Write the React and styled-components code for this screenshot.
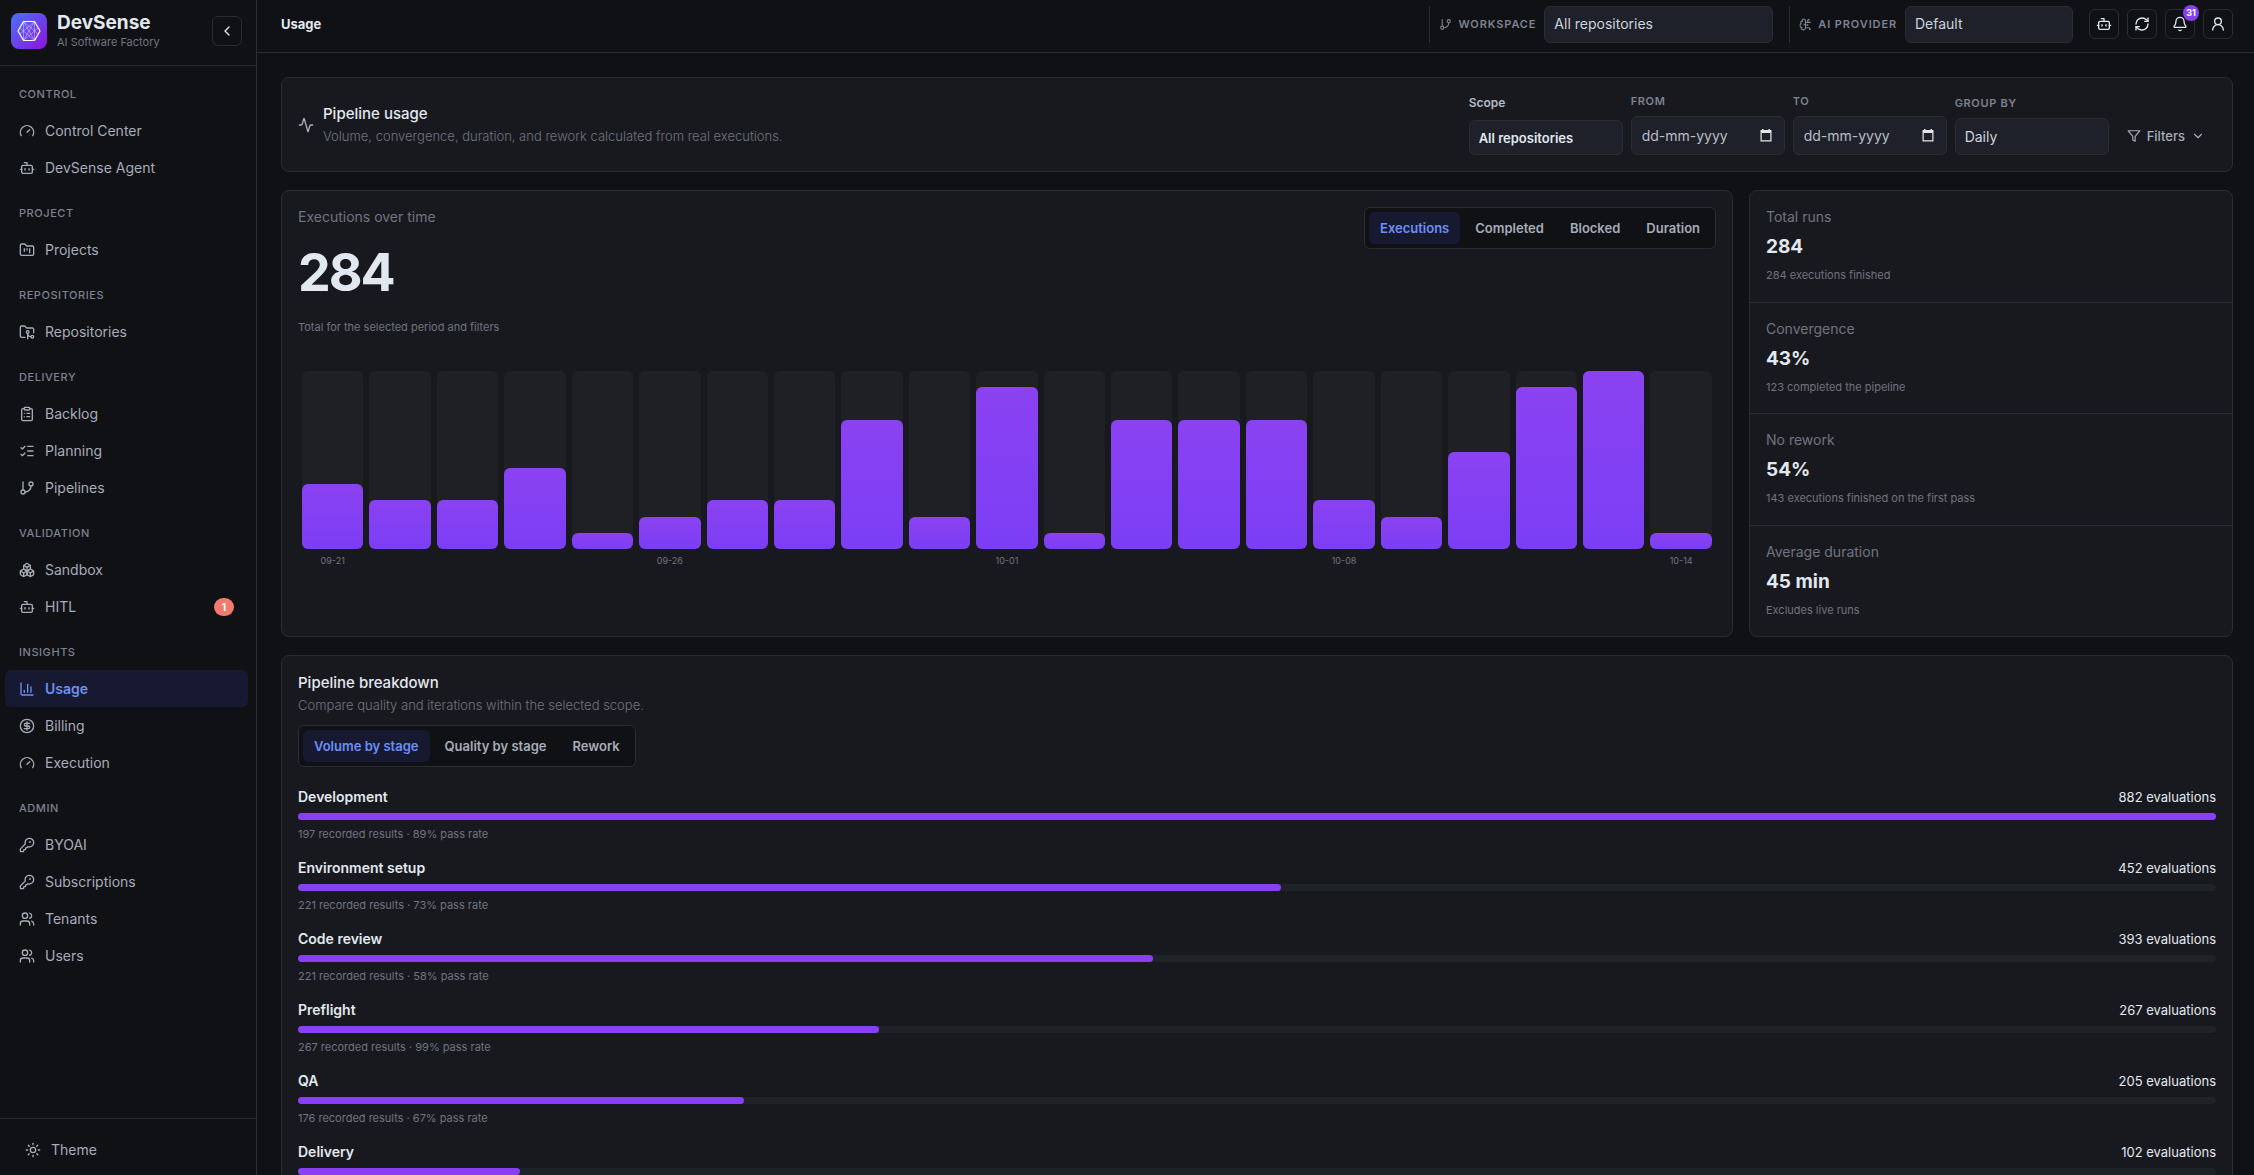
import React, { useState } from "react";
import styled, { createGlobalStyle, css } from "styled-components";
import {
  Activity,
  Bell,
  Bot,
  Boxes,
  BrainCircuit,
  ChartColumn,
  ChevronDown,
  ChevronLeft,
  CircleDollarSign,
  ClipboardList,
  FolderGit2,
  FolderKanban,
  Gauge,
  GitBranch,
  KeyRound,
  ListChecks,
  RefreshCw,
  Sun,
  UserRound,
  Users,
} from "lucide-react";

const vars = {
  bg: "#101115",
  card: "#18191e",
  field: "#1e2129",
  border: "#2b2c33",
  text: "#e2e8f0",
  textSoft: "#a7acb9",
  muted: "#70747f",
  accent: "#6c8ff5",
  accentBg: "#171930",
  purple: "#8940f2",
  track: "#1f2226",
};

const navGroups = [
  {
    title: "Control",
    items: [
      { label: "Control Center", icon: Gauge },
      { label: "DevSense Agent", icon: Bot },
    ],
  },
  { title: "Project", items: [{ label: "Projects", icon: FolderKanban }] },
  {
    title: "Repositories",
    items: [{ label: "Repositories", icon: FolderGit2 }],
  },
  {
    title: "Delivery",
    items: [
      { label: "Backlog", icon: ClipboardList },
      { label: "Planning", icon: ListChecks },
      { label: "Pipelines", icon: GitBranch },
    ],
  },
  {
    title: "Validation",
    items: [
      { label: "Sandbox", icon: Boxes },
      { label: "HITL", icon: Bot, count: 1 },
    ],
  },
  {
    title: "Insights",
    items: [
      { label: "Usage", icon: ChartColumn, active: true },
      { label: "Billing", icon: CircleDollarSign },
      { label: "Execution", icon: Gauge },
    ],
  },
  {
    title: "Admin",
    items: [
      { label: "BYOAI", icon: KeyRound },
      { label: "Subscriptions", icon: KeyRound },
      { label: "Tenants", icon: Users },
      { label: "Users", icon: Users },
    ],
  },
];

const runs = [
  { value: 4, label: "09-21" },
  { value: 3 },
  { value: 3 },
  { value: 5 },
  { value: 1 },
  { value: 2, label: "09-26" },
  { value: 3 },
  { value: 3 },
  { value: 8 },
  { value: 2 },
  { value: 10, label: "10-01" },
  { value: 1 },
  { value: 8 },
  { value: 8 },
  { value: 8 },
  { value: 3, label: "10-08" },
  { value: 2 },
  { value: 6 },
  { value: 10 },
  { value: 11 },
  { value: 1, label: "10-14" },
];
const maxRuns = Math.max(...runs.map((run) => run.value));

const stats = [
  { label: "Total runs", value: "284", hint: "284 executions finished" },
  { label: "Convergence", value: "43%", hint: "123 completed the pipeline" },
  {
    label: "No rework",
    value: "54%",
    hint: "143 executions finished on the first pass",
  },
  { label: "Average duration", value: "45 min", hint: "Excludes live runs" },
];

const stages = [
  { name: "Development", count: 882, results: 197, rate: 89 },
  { name: "Environment setup", count: 452, results: 221, rate: 73 },
  { name: "Code review", count: 393, results: 221, rate: 58 },
  { name: "Preflight", count: 267, results: 267, rate: 99 },
  { name: "QA", count: 205, results: 176, rate: 67 },
  { name: "Delivery", count: 102 },
];
const maxCount = stages[0].count;

const Logo = () => (
  <LogoBox>
    <svg width="36" height="36" viewBox="0 0 36 36" fill="none" stroke="#fff">
      <path
        d="M7 18 12.5 8.5h11L29 18l-5.5 9.5h-11z"
        strokeWidth="1.2"
        strokeLinejoin="round"
      />
      <path
        d="M12.5 8.5 23.5 27.5M23.5 8.5 12.5 27.5M12.5 8.5 27 21M23.5 8.5 9 21M12.5 27.5 27 15M23.5 27.5 9 15M12.5 8.5v19M23.5 8.5v19"
        strokeWidth="0.6"
        opacity="0.65"
      />
    </svg>
  </LogoBox>
);

const FilterIcon = () => (
  <svg
    width="14"
    height="14"
    viewBox="0 0 24 24"
    fill="none"
    stroke="currentColor"
    strokeWidth="2"
    strokeLinejoin="round"
    aria-hidden="true"
  >
    <polygon points="22 3 2 3 10 12.46 10 19 14 21 14 12.46 22 3" />
  </svg>
);

const CalendarIcon = () => (
  <svg width="12" height="13" viewBox="0 0 12 13" aria-hidden="true">
    <path
      d="M2 0h1.500v1h5V0H10v1h1.500v11.500H.5V1H2zM1.700 4v7.300h8.600V4z"
      fill="#e6e6e6"
      fillRule="evenodd"
    />
  </svg>
);

const TabBar = ({ label, options }) => {
  const [current, setCurrent] = useState(options[0]);
  return (
    <Tabs role="tablist" aria-label={label}>
      {options.map((option) => (
        <Tab
          key={option}
          type="button"
          role="tab"
          aria-selected={option === current}
          $active={option === current}
          onClick={() => setCurrent(option)}
        >
          {option}
        </Tab>
      ))}
    </Tabs>
  );
};

const DateField = ({ id, label }) => (
  <Field>
    <FieldLabel htmlFor={id}>{label}</FieldLabel>
    <DateBox>
      <DateInput id={id} type="text" placeholder="dd-mm-yyyy" />
      <CalendarIcon />
    </DateBox>
  </Field>
);

const Sidebar = () => (
  <Aside>
    <Brand>
      <Logo />
      <BrandText>
        <BrandName>DevSense</BrandName>
        <BrandTagline>AI Software Factory</BrandTagline>
      </BrandText>
      <IconButton type="button" aria-label="Collapse sidebar">
        <ChevronLeft size={16} />
      </IconButton>
    </Brand>
    <Nav>
      {navGroups.map((group) => (
        <div key={group.title}>
          <NavTitle>{group.title}</NavTitle>
          {group.items.map(({ label, icon: Icon, active, count }) => (
            <NavLink key={label} href="#" $active={active}>
              <Icon size={16} />
              {label}
              {count && <NavCount>{count}</NavCount>}
            </NavLink>
          ))}
        </div>
      ))}
    </Nav>
    <AsideFooter>
      <ThemeButton type="button">
        <Sun size={16} />
        Theme
      </ThemeButton>
    </AsideFooter>
  </Aside>
);

const Header = () => (
  <Topbar>
    <PageTitle>Usage</PageTitle>
    <Context>
      <ContextLabel htmlFor="workspace">
        <GitBranch size={13} />
        Workspace
      </ContextLabel>
      <ContextSelect id="workspace" $width={229}>
        <option>All repositories</option>
      </ContextSelect>
    </Context>
    <Context>
      <ContextLabel htmlFor="provider">
        <BrainCircuit size={13} />
        AI Provider
      </ContextLabel>
      <ContextSelect id="provider" $width={168}>
        <option>Default</option>
      </ContextSelect>
    </Context>
    <Actions>
      <IconButton type="button" aria-label="Agent">
        <Bot size={16} />
      </IconButton>
      <IconButton type="button" aria-label="Refresh">
        <RefreshCw size={16} />
      </IconButton>
      <IconButton type="button" aria-label="Notifications">
        <Bell size={16} />
        <AlertCount>31</AlertCount>
      </IconButton>
      <IconButton type="button" aria-label="Account">
        <UserRound size={16} />
      </IconButton>
    </Actions>
  </Topbar>
);

const App = () => {
  return (
    <>
      <GlobalStyle />
      <Shell>
        <Sidebar />
        <Main>
          <Header />
          <Content>
            <FilterCard>
              <Activity size={16} />
              <Intro>
                <CardTitle>Pipeline usage</CardTitle>
                <CardText>
                  Volume, convergence, duration, and rework calculated from real
                  executions.
                </CardText>
              </Intro>
              <Fields>
                <Field>
                  <ScopeLabel htmlFor="scope">Scope</ScopeLabel>
                  <ScopeSelect id="scope">
                    <option>All repositories</option>
                  </ScopeSelect>
                </Field>
                <DateField id="from" label="From" />
                <DateField id="to" label="To" />
                <Field>
                  <FieldLabel htmlFor="group">Group by</FieldLabel>
                  <Select id="group">
                    <option>Daily</option>
                  </Select>
                </Field>
                <FiltersButton type="button">
                  <FilterIcon />
                  Filters
                  <ChevronDown size={14} />
                </FiltersButton>
              </Fields>
            </FilterCard>

            <Overview>
              <TrendCard>
                <TrendHead>
                  <div>
                    <Label>Executions over time</Label>
                    <Total>284</Total>
                    <Hint>Total for the selected period and filters</Hint>
                  </div>
                  <TabBar
                    label="Metric"
                    options={["Executions", "Completed", "Blocked", "Duration"]}
                  />
                </TrendHead>
                <Chart>
                  {runs.map((run, index) => (
                    <Column key={index}>
                      <Slot>
                        <Bar
                          style={{ height: `${(run.value / maxRuns) * 100}%` }}
                        />
                      </Slot>
                      <Tick>{run.label}</Tick>
                    </Column>
                  ))}
                </Chart>
              </TrendCard>
              <StatsCard>
                {stats.map((stat) => (
                  <Stat key={stat.label}>
                    <Label>{stat.label}</Label>
                    <StatValue>{stat.value}</StatValue>
                    <Hint>{stat.hint}</Hint>
                  </Stat>
                ))}
              </StatsCard>
            </Overview>

            <BreakdownCard>
              <CardTitle>Pipeline breakdown</CardTitle>
              <CardText>
                Compare quality and iterations within the selected scope.
              </CardText>
              <TabBar
                label="Breakdown"
                options={["Volume by stage", "Quality by stage", "Rework"]}
              />
              <Stages>
                {stages.map((stage) => (
                  <li key={stage.name}>
                    <StageHead>
                      <strong>{stage.name}</strong>
                      <span>{stage.count} evaluations</span>
                    </StageHead>
                    <StageTrack>
                      <StageFill
                        style={{ width: `${(stage.count / maxCount) * 100}%` }}
                      />
                    </StageTrack>
                    {stage.results && (
                      <Hint>
                        {stage.results} recorded results · {stage.rate}% pass
                        rate
                      </Hint>
                    )}
                  </li>
                ))}
              </Stages>
            </BreakdownCard>
          </Content>
        </Main>
      </Shell>
    </>
  );
};

export default App;

const GlobalStyle = createGlobalStyle`
  * {
    box-sizing: border-box;
  }

  body {
    margin: 0;
    background: ${vars.bg};
    color: ${vars.text};
    font-family: "Inter", sans-serif;
    font-size: 13px;
    line-height: 20px;
  }

  button,
  input,
  select {
    font: inherit;
    color: inherit;
  }

  h1, h2, p, ul {
    margin: 0;
    padding: 0;
  }

  svg {
    display: block;
    flex: none;
  }
`;

const Shell = styled.div`
  display: flex;
  height: 100vh;
  overflow: hidden;
`;

const Aside = styled.aside`
  display: flex;
  flex: none;
  flex-direction: column;
  width: 257px;
  border-right: 1px solid ${vars.border};
`;

const Brand = styled.div`
  display: flex;
  flex: none;
  align-items: center;
  gap: 10px;
  height: 66px;
  padding: 0 14px 4px 11px;
  border-bottom: 1px solid ${vars.border};
`;

const LogoBox = styled.div`
  flex: none;
  border-radius: 8px;
  background: linear-gradient(135deg, #4c70f7, #6a44ec 50%, #930fdc);
`;

const BrandText = styled.div`
  flex: 1;
`;

const BrandName = styled.div`
  font-size: 19px;
  font-weight: 700;
  line-height: 22px;
`;

const BrandTagline = styled.div`
  color: ${vars.muted};
  font-size: 11px;
  line-height: 16px;
`;

const IconButton = styled.button`
  position: relative;
  display: flex;
  flex: none;
  align-items: center;
  justify-content: center;
  width: 30px;
  height: 30px;
  padding: 0;
  border: 1px solid ${vars.border};
  border-radius: 6px;
  background: transparent;
  cursor: pointer;
`;

const AlertCount = styled.span`
  position: absolute;
  top: -5px;
  right: -5px;
  width: 16px;
  height: 16px;
  border-radius: 8px;
  background: ${vars.purple};
  color: #fff;
  font-size: 9px;
  font-weight: 700;
  line-height: 16px;
  text-align: center;
`;

const Nav = styled.nav`
  flex: 1;
  padding: 1px 8px 0 5px;
  overflow: hidden;
`;

const NavTitle = styled.h2`
  padding: 20px 14px 10px;
  color: #7d828e;
  font-size: 11px;
  font-weight: 500;
  line-height: 15px;
  letter-spacing: 0.05em;
  text-transform: uppercase;
`;

const NavLink = styled.a`
  display: flex;
  align-items: center;
  gap: 10px;
  height: 37px;
  padding: 0 14px;
  border-radius: 6px;
  color: ${vars.textSoft};
  font-size: 14px;
  text-decoration: none;

  ${({ $active }) =>
    $active &&
    css`
      background: ${vars.accentBg};
      color: ${vars.accent};
      font-weight: 600;
    `}
`;

const NavCount = styled.span`
  min-width: 20px;
  margin-left: auto;
  border-radius: 9px;
  background: #f07a6c;
  color: #fff;
  font-size: 10px;
  font-weight: 700;
  line-height: 18px;
  text-align: center;
`;

const AsideFooter = styled.div`
  flex: none;
  padding: 12px 8px 7px 11px;
  border-top: 1px solid ${vars.border};
`;

const ThemeButton = styled.button`
  display: flex;
  align-items: center;
  gap: 10px;
  width: 100%;
  height: 37px;
  padding: 0 14px;
  border: 0;
  background: transparent;
  color: ${vars.textSoft};
  font-size: 14px;
  cursor: pointer;
`;

const Main = styled.main`
  display: flex;
  flex: 1;
  flex-direction: column;
  min-width: 0;
`;

const Topbar = styled.header`
  display: flex;
  flex: none;
  align-items: center;
  gap: 16px;
  height: 53px;
  padding: 0 21px 4px 24px;
  border-bottom: 1px solid ${vars.border};
`;

const PageTitle = styled.h1`
  margin-right: auto;
  font-size: 13px;
  font-weight: 700;
`;

const Context = styled.div`
  display: flex;
  align-items: center;
  gap: 8px;
  padding-left: 9px;
  border-left: 1px solid ${vars.border};
`;

const ContextLabel = styled.label`
  display: flex;
  align-items: center;
  gap: 6px;
  color: #7d828e;
  font-size: 11px;
  font-weight: 600;
  letter-spacing: 0.08em;
  text-transform: uppercase;
`;

const Actions = styled.div`
  display: flex;
  gap: 8px;
`;

const fieldBox = css`
  border: 1px solid ${vars.border};
  border-radius: 6px;
  background: ${vars.field};
  color: #cdd3de;
  font-size: 14px;
`;

const Select = styled.select`
  ${fieldBox}
  width: 154px;
  height: 37px;
  padding: 0 9px;
  appearance: none;
`;

const ContextSelect = styled(Select)`
  width: ${({ $width }) => $width}px;
`;

const ScopeSelect = styled(Select)`
  height: 35px;
  color: ${vars.text};
  font-size: 13px;
  font-weight: 600;
`;

const Content = styled.div`
  display: flex;
  flex: 1;
  flex-direction: column;
  gap: 18px;
  min-height: 0;
  padding: 24px 21px 24px 24px;
  overflow: hidden;
`;

const Card = styled.section`
  flex: none;
  border: 1px solid ${vars.border};
  border-radius: 8px;
  background: ${vars.card};
`;

const FilterCard = styled(Card)`
  display: flex;
  align-items: center;
  gap: 9px;
  padding: 16px;
  color: ${vars.textSoft};
`;

const Intro = styled.div`
  flex: 1;
`;

const CardTitle = styled.h2`
  color: ${vars.text};
  font-size: 15px;
  font-weight: 500;
  line-height: 22px;
`;

const CardText = styled.p`
  color: ${vars.muted};
  font-size: 13px;
  font-weight: 300;
  line-height: 22px;
`;

const Fields = styled.div`
  display: flex;
  align-items: flex-end;
  gap: 8px;
`;

const Field = styled.div`
  display: flex;
  flex-direction: column;
  gap: 8px;
`;

const FieldLabel = styled.label`
  color: #7d828e;
  font-size: 11px;
  font-weight: 600;
  line-height: 14px;
  letter-spacing: 0.06em;
  text-transform: uppercase;
`;

const ScopeLabel = styled.label`
  color: #b4b9c5;
  font-size: 12px;
  font-weight: 600;
  line-height: 18px;
`;

const DateBox = styled.div`
  ${fieldBox}
  display: flex;
  align-items: center;
  width: 154px;
  height: 39px;
  padding: 0 12px 0 10px;
`;

const DateInput = styled.input`
  flex: 1;
  min-width: 0;
  padding: 0;
  border: 0;
  outline: 0;
  background: transparent;

  &::placeholder {
    color: #b9bec9;
  }
`;

const FiltersButton = styled.button`
  display: flex;
  align-items: center;
  gap: 6px;
  height: 39px;
  padding: 0 11px 0 10px;
  border: 0;
  background: transparent;
  color: ${vars.textSoft};
  font-size: 13px;
  font-weight: 500;
  cursor: pointer;
`;

const Overview = styled.div`
  display: grid;
  flex: none;
  grid-template-columns: 3fr 1fr;
  gap: 16px;
`;

const TrendCard = styled(Card)`
  padding: 16px;
`;

const TrendHead = styled.div`
  display: flex;
  align-items: flex-start;
  justify-content: space-between;
`;

const Label = styled.p`
  color: ${vars.muted};
  font-size: 14px;
  line-height: 20px;
`;

const Total = styled.p`
  margin: 20px 0;
  font-size: 52px;
  font-weight: 700;
  line-height: 52px;
  letter-spacing: -0.04em;
`;

const Hint = styled.p`
  color: ${vars.muted};
  font-size: 11px;
  line-height: 16px;
`;

const Tabs = styled.div`
  display: inline-flex;
  gap: 4px;
  padding: 4px;
  border: 1px solid ${vars.border};
  border-radius: 6px;
  background: ${vars.bg};
`;

const Tab = styled.button`
  height: 32px;
  padding: 0 11px;
  border: 0;
  border-radius: 6px;
  background: ${({ $active }) => ($active ? vars.accentBg : "transparent")};
  color: ${({ $active }) => ($active ? vars.accent : vars.textSoft)};
  font-size: 13px;
  font-weight: 600;
  cursor: pointer;
`;

const Chart = styled.div`
  display: flex;
  gap: 6px;
  min-height: 249px;
  padding: 0 4px;
  margin-top: 36px;
`;

const Column = styled.div`
  flex: 1;
  min-width: 0;
`;

const Slot = styled.div`
  display: flex;
  align-items: flex-end;
  height: 178px;
  border-radius: 6px;
  background: #1f2024;
`;

const Bar = styled.div`
  width: 100%;
  border-radius: 6px;
  background: linear-gradient(180deg, #8b42f1, #7b3ef5);
`;

const Tick = styled.div`
  margin-top: 5px;
  color: ${vars.muted};
  font-size: 9px;
  line-height: 14px;
  text-align: center;
`;

const StatsCard = styled(Card)`
  display: flex;
  flex-direction: column;
`;

const Stat = styled.div`
  flex: 1;
  padding: 16px;

  & + & {
    border-top: 1px solid ${vars.border};
  }
`;

const StatValue = styled.p`
  margin: 8px 0;
  font-size: 19px;
  font-weight: 700;
  line-height: 24px;
`;

const BreakdownCard = styled(Card)`
  padding: 16px;

  ${Tabs} {
    margin-top: 9px;
  }
`;

const Stages = styled.ul`
  display: grid;
  gap: 16px;
  margin-top: 20px;
  list-style: none;
`;

const StageHead = styled.div`
  display: flex;
  justify-content: space-between;

  strong {
    font-size: 14px;
    font-weight: 600;
  }
`;

const StageTrack = styled.div`
  height: 7px;
  margin: 6px 0;
  border-radius: 4px;
  background: ${vars.track};
`;

const StageFill = styled.div`
  height: 100%;
  border-radius: 4px;
  background: ${vars.purple};
`;
